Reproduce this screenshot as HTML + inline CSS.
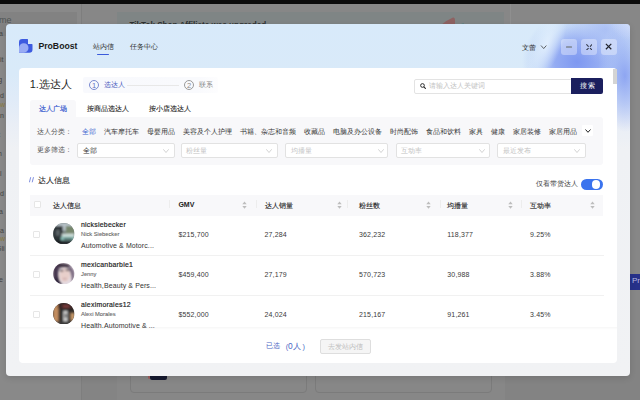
<!DOCTYPE html>
<html><head><meta charset="utf-8">
<style>
*{box-sizing:border-box;margin:0;padding:0}
html,body{width:640px;height:400px;overflow:hidden}
body{position:relative;background:#878787;font-family:"Liberation Sans",sans-serif;color:#222}
.a{position:absolute;white-space:nowrap;line-height:1}
.t7{font-size:7px}
.blue{color:#4266d0}
.gray{color:#bdbdbd}
.chev{position:absolute;width:6px;height:4px}
.sel{position:absolute;top:142.5px;height:15px;background:#fff;border:0.6px solid #e2e2e2;border-radius:2px}
.sort{position:absolute;top:200.5px;width:5px;height:8px}
.sep{position:absolute;top:200px;width:0.7px;height:8px;background:#ededed}
.cb{position:absolute;width:7.2px;height:7.2px;border:0.7px solid #e6e6e6;border-radius:1px;background:#fff}
.av{position:absolute;left:53px;width:22px;height:22px;border-radius:50%;overflow:hidden}
.nm{font-size:6.9px;color:#222;-webkit-text-stroke:0.18px #222;letter-spacing:0.25px}
.sub{font-size:5.75px;color:#666;-webkit-text-stroke:0.1px #666}
.cat{font-size:7px;color:#333;letter-spacing:0.1px}
.val{font-size:7px;color:#3a3a3a;letter-spacing:0.15px}
.hd{font-size:7px;color:#1e1e1e;-webkit-text-stroke:0.12px #1e1e1e}
.hdb{font-size:7px;font-weight:bold;color:#222}
.rowsep{position:absolute;left:29.5px;width:574px;height:0.8px;background:#f1f1f1}
</style></head>
<body>
<!-- background page -->
<div class="a" style="left:0;top:0;width:640px;height:4px;background:#0b0b0b"></div>
<div class="a" style="left:0;top:4px;width:81px;height:396px;background:#898989"></div>
<div class="a" style="left:0;top:12px;width:77px;height:24px;background:#828282"></div>
<div class="a" style="left:81px;top:4px;width:1px;height:396px;background:#7e7e7e"></div>
<div class="a" style="left:117px;top:11.5px;width:387px;height:30px;background:#7f8585"></div>
<div class="a" style="left:509.5px;top:4px;width:1px;height:30px;background:#8f8f8f"></div>
<div class="a" style="left:129.5px;top:21.6px;font-size:8.13px;font-weight:bold;color:#2e3232">TikTok Shop Affiliate was upgraded</div>
<svg class="a" style="left:441px;top:16.5px" width="24" height="8" viewBox="0 0 24 8"><path d="M0 8 Q6 3 12 0.5 Q14 0 14 3 V8 Z" fill="#8e6262"/><path d="M19 8 Q20 6 23 6.5 V8 Z" fill="#4f7f80"/></svg>
<div class="a" style="left:-1px;top:15.5px;font-size:9px;color:#4f5454">me</div>
<div class="a" style="left:-4px;top:30px;font-size:7px;color:#444">lla</div>
<div class="a" style="left:-4px;top:56px;font-size:7px;color:#444">eit</div>
<div class="a" style="left:-4px;top:76px;font-size:7px;color:#444">rg</div>
<div class="a" style="left:-4px;top:92px;font-size:7px;color:#444">od</div>
<div class="a" style="left:-4px;top:100.5px;font-size:7px;color:#8a7a40">ew</div>
<div class="a" style="left:-4px;top:112px;font-size:7px;color:#444">an</div>
<div class="a" style="left:-4px;top:131px;font-size:7px;color:#444">rt</div>
<div class="a" style="left:-4px;top:150px;font-size:7px;color:#444">m</div>
<div class="a" style="left:-4px;top:170px;font-size:7px;color:#444">al</div>
<div class="a" style="left:-4px;top:190px;font-size:7px;color:#444">od</div>
<div class="a" style="left:-4px;top:207.5px;font-size:7px;color:#444">lla</div>
<div class="a" style="left:-4px;top:226.5px;font-size:7px;color:#444">oa</div>
<div class="a" style="left:-4px;top:234.5px;font-size:7px;color:#8a7a40">ew</div>
<div class="a" style="left:-4px;top:244.5px;font-size:7px;color:#444">Gli</div>
<div class="a" style="left:-4px;top:276px;font-size:7px;color:#444">lle</div>

<div class="a" style="left:630px;top:273.5px;width:10px;height:16.5px;background:#27318a"></div>
<div class="a" style="left:632px;top:277px;font-size:8px;color:#b8bce0">Pr</div>
<div class="a" style="left:129.5px;top:350px;width:177px;height:43px;border:0.8px solid #7b7b7b;border-radius:4px"></div>
<div class="a" style="left:314.5px;top:350px;width:177.5px;height:43px;border:0.8px solid #7b7b7b;border-radius:4px"></div>
<div class="a" style="left:505px;top:350px;width:135px;height:50px;background:#838383"></div>
<div class="a" style="left:82px;top:350px;width:35px;height:50px;background:#848484"></div>
<div class="a" style="left:147.5px;top:376px;width:3px;height:3px;background:#a06060;border-radius:0 0 2px 2px"></div>
<div class="a" style="left:149.7px;top:375px;width:17.3px;height:4.8px;background:#161a30;border-radius:0 0 2px 2px"></div>

<!-- modal -->
<div class="a" style="left:6px;top:24px;width:624px;height:352px;border-radius:4px;overflow:hidden;box-shadow:0 2px 6px rgba(0,0,0,0.12);background:linear-gradient(180deg,#d8eafa 0px,#d9eaf9 50px,#e0ebf8 75px,#e9eef6 100px,#eff1f4 125px,#f1f2f4 352px)">
  <div class="a" style="left:516px;top:-12px;width:110px;height:100px;background:radial-gradient(ellipse 50% 50% at 50% 50%,rgba(118,145,240,0.92) 0%,rgba(128,154,241,0.78) 40%,rgba(160,185,244,0.4) 72%,rgba(220,233,248,0) 100%)"></div>
  <div class="a" style="left:560px;top:-30px;width:80px;height:70px;background:radial-gradient(ellipse 50% 50% at 50% 50%,rgba(150,172,243,0.6) 0%,rgba(170,190,245,0.35) 55%,rgba(220,233,248,0) 100%)"></div>
  <div class="a" style="left:594px;top:-4px;width:50px;height:112px;background:radial-gradient(ellipse 50% 50% at 50% 50%,rgba(125,150,240,0.8) 0%,rgba(140,165,242,0.5) 50%,rgba(200,215,245,0) 100%)"></div>
  <div class="a" style="left:526px;top:-18px;width:30px;height:76px;transform:rotate(22deg);background:radial-gradient(ellipse 50% 50% at 50% 50%,rgba(238,249,255,0.75) 0%,rgba(235,248,255,0.4) 55%,rgba(235,248,255,0) 100%)"></div>
  <div class="a" style="left:600px;top:-16px;width:44px;height:36px;background:radial-gradient(ellipse 50% 50% at 60% 40%,rgba(212,220,250,0.7) 0%,rgba(212,220,250,0) 100%)"></div>
</div>

<!-- header -->
<svg class="a" style="left:19.25px;top:39px" width="13.5" height="13.75" viewBox="0 0 13.5 13.75">
  <path d="M0 3.2 A3.2 3.2 0 0 1 3.2 0 H8.4 A0.6 0.6 0 0 1 9 0.6 V5 H12.9 A0.6 0.6 0 0 1 13.5 5.6 V10.5 A3.25 3.25 0 0 1 10.25 13.75 H0 Z" fill="#3d5be0"/>
  <path d="M0 13.75 V8.95 A4.75 4.75 0 0 1 9.5 8.95 A4.8 4.8 0 0 1 4.75 13.75 Z" fill="#98abf4"/>
</svg>
<div class="a" style="left:38.4px;top:41.6px;font-size:8.7px;font-weight:bold;color:#1a1a1a">ProBoost</div>
<div class="a t7" style="left:92.75px;top:42.5px;color:#333">站内信</div>
<div class="a" style="left:97px;top:53.5px;width:12px;height:1.8px;border-radius:1px;background:#3b5bdb"></div>
<div class="a t7" style="left:130.25px;top:42.5px;color:#333">任务中心</div>
<div class="a t7" style="left:522.2px;top:43.5px;color:#2a2a2a">文蕾</div>
<svg class="chev" style="left:539.6px;top:44.5px;width:7.4px;height:4.3px" viewBox="0 0 6 4"><path d="M0.5 0.5 L3 3.3 L5.5 0.5" fill="none" stroke="#333" stroke-width="0.7"/></svg>
<div class="a" style="left:561px;top:39px;width:16px;height:16px;border-radius:3px;background:rgba(255,255,255,0.36)"></div>
<div class="a" style="left:581px;top:39px;width:16px;height:16px;border-radius:3px;background:rgba(255,255,255,0.36)"></div>
<div class="a" style="left:601px;top:39px;width:16px;height:16px;border-radius:3px;background:rgba(255,255,255,0.36)"></div>
<div class="a" style="left:566px;top:45.8px;width:6px;height:2px;border-radius:0.5px;background:#8c96aa"></div>
<svg class="a" style="left:585.5px;top:43.6px" width="6.6" height="6.6" viewBox="0 0 6.6 6.6">
  <path d="M0.7 0.7 L2.3 2.3 M5.9 0.7 L4.3 2.3 M0.7 5.9 L2.3 4.3 M5.9 5.9 L4.3 4.3" fill="none" stroke="#353b4a" stroke-width="1.1" stroke-linecap="round"/>
</svg>
<svg class="a" style="left:605px;top:43.3px" width="7.2" height="7.2" viewBox="0 0 7.2 7.2">
  <path d="M0.9 0.9 L6.3 6.3 M6.3 0.9 L0.9 6.3" fill="none" stroke="#20232c" stroke-width="1.2"/>
</svg>

<!-- card -->
<div class="a" style="left:19px;top:68px;width:598px;height:295px;border-radius:4px;background:#fff"></div>
<div class="a" style="left:613px;top:69px;width:3.5px;height:15px;background:#d4d4d4"></div>

<div class="a" style="left:29.7px;top:78.5px;font-size:11px;color:#1f1f1f">1.选达人</div>
<div class="a" style="left:82.5px;top:77px;width:135px;height:16px;border-radius:2px;background:linear-gradient(90deg,#f8f9fd,#f9fafd 85%,#fdfdfe)"></div>
<div class="a" style="left:89px;top:80.25px;width:10px;height:10px;border-radius:50%;border:0.65px solid #7b8ad0"></div>
<div class="a" style="left:91.9px;top:81.5px;font-size:7.5px;color:#6575c4">1</div>
<div class="a t7 blue" style="left:103.75px;top:81.2px;color:#4a5bbd">选达人</div>
<div class="a" style="left:127px;top:85px;width:52px;height:0.6px;background:#e8e8e8"></div>
<div class="a" style="left:184px;top:80.25px;width:10px;height:10px;border-radius:50%;border:0.8px solid #9a9a9a"></div>
<div class="a" style="left:186.9px;top:81.5px;font-size:7.5px;color:#8a8a8a">2</div>
<div class="a t7" style="left:198.75px;top:81.2px;color:#888">联系</div>

<div class="a" style="left:414px;top:78.5px;width:158px;height:15px;border:0.7px solid #e3e3e3;border-radius:2px 0 0 2px;background:#fff"></div>
<svg class="a" style="left:419.6px;top:83px" width="6.2" height="6.2" viewBox="0 0 6 6"><circle cx="2.4" cy="2.4" r="1.8" fill="none" stroke="#222" stroke-width="0.9"/><path d="M3.7 3.7 L5.6 5.6" stroke="#222" stroke-width="1"/></svg>
<div class="a t7 gray" style="left:428.75px;top:82px;color:#c2c2c2">请输入达人关键词</div>
<div class="a" style="left:571px;top:78px;width:32px;height:15.5px;border-radius:0 2px 2px 0;background:#1b1f5e"></div>
<div class="a t7" style="left:579.5px;top:82px;color:#fff;letter-spacing:1.6px">搜索</div>

<!-- tabs -->
<div class="a" style="left:29.5px;top:100px;width:46px;height:18px;border-radius:3px 3px 0 0;background:#f8f8fa"></div>
<div class="a t7" style="left:39px;top:105.2px;color:#3d60d0;-webkit-text-stroke:0.2px currentColor">达人广场</div>
<div class="a t7" style="left:87.1px;top:105.2px;color:#222;-webkit-text-stroke:0.1px currentColor">按商品选达人</div>
<div class="a t7" style="left:149.4px;top:105.2px;color:#222;-webkit-text-stroke:0.1px currentColor">按小店选达人</div>

<!-- filter panel -->
<div class="a" style="left:29.5px;top:117px;width:573.5px;height:48px;border-radius:0 3px 3px 3px;background:#f8f8fa"></div>
<div class="a t7" style="left:37px;top:127.8px;color:#555">达人分类：</div>
<div class="a t7" style="left:81.5px;top:127.8px;color:#4266d0">全部</div>
<div class="a t7" style="left:103.5px;top:127.8px;color:#333">汽车摩托车</div>
<div class="a t7" style="left:146.5px;top:127.8px;color:#333">母婴用品</div>
<div class="a t7" style="left:182.5px;top:127.8px;color:#333">美容及个人护理</div>
<div class="a t7" style="left:240px;top:127.8px;color:#333">书籍、杂志和音频</div>
<div class="a t7" style="left:303.75px;top:127.8px;color:#333">收藏品</div>
<div class="a t7" style="left:332.5px;top:127.8px;color:#333">电脑及办公设备</div>
<div class="a t7" style="left:389.5px;top:127.8px;color:#333">时尚配饰</div>
<div class="a t7" style="left:425.5px;top:127.8px;color:#333">食品和饮料</div>
<div class="a t7" style="left:468.75px;top:127.8px;color:#333">家具</div>
<div class="a t7" style="left:490.5px;top:127.8px;color:#333">健康</div>
<div class="a t7" style="left:512.5px;top:127.8px;color:#333">家居装修</div>
<div class="a t7" style="left:548.75px;top:127.8px;color:#333">家居用品</div>
<div class="a" style="left:582px;top:125px;width:10.5px;height:10.5px;background:#fff;border-radius:1px"></div>
<svg class="chev" style="left:584.6px;top:129px;width:6px;height:4px" viewBox="0 0 6 4"><path d="M0.5 0.5 L3 3.3 L5.5 0.5" fill="none" stroke="#222" stroke-width="1"/></svg>

<div class="a t7" style="left:37px;top:146px;color:#555">更多筛选：</div>
<div class="sel" style="left:77.25px;width:97.25px"></div>
<div class="a t7" style="left:83.25px;top:146.5px;color:#333">全部</div>
<svg class="chev" style="left:162.75px;top:148.5px" viewBox="0 0 6 4"><path d="M0.3 0.3 L3 3.5 L5.7 0.3" fill="none" stroke="#b5b5b5" stroke-width="0.6"/></svg>
<div class="sel" style="left:180.5px;width:97.5px"></div>
<div class="a t7" style="left:186.25px;top:146.5px;color:#c2c2c2">粉丝量</div>
<svg class="chev" style="left:266.25px;top:148.5px" viewBox="0 0 6 4"><path d="M0.3 0.3 L3 3.5 L5.7 0.3" fill="none" stroke="#b5b5b5" stroke-width="0.6"/></svg>
<div class="sel" style="left:284.5px;width:103.5px"></div>
<div class="a t7" style="left:290.75px;top:146.5px;color:#c2c2c2">均播量</div>
<svg class="chev" style="left:377.5px;top:148.5px" viewBox="0 0 6 4"><path d="M0.3 0.3 L3 3.5 L5.7 0.3" fill="none" stroke="#b5b5b5" stroke-width="0.6"/></svg>
<div class="sel" style="left:395.5px;width:94px"></div>
<div class="a t7" style="left:401.25px;top:146.5px;color:#c2c2c2">互动率</div>
<svg class="chev" style="left:478.5px;top:148.5px" viewBox="0 0 6 4"><path d="M0.3 0.3 L3 3.5 L5.7 0.3" fill="none" stroke="#b5b5b5" stroke-width="0.6"/></svg>
<div class="sel" style="left:496.75px;width:88.75px"></div>
<div class="a t7" style="left:502.5px;top:146.5px;color:#c2c2c2">最近发布</div>
<svg class="chev" style="left:574.25px;top:148.5px" viewBox="0 0 6 4"><path d="M0.3 0.3 L3 3.5 L5.7 0.3" fill="none" stroke="#b5b5b5" stroke-width="0.6"/></svg>

<!-- section header -->
<svg class="a" style="left:29px;top:177.4px" width="5" height="5.5" viewBox="0 0 5 5.5"><path d="M1.7 0.2 L0.4 5.3 M4.5 0.2 L3.2 5.3" stroke="#5468d2" stroke-width="0.75"/></svg>
<div class="a" style="left:37.75px;top:176.8px;font-size:7.5px;color:#1e1e1e;-webkit-text-stroke:0.08px #1e1e1e">达人信息</div>
<div class="a t7" style="left:535.6px;top:180.3px;color:#444">仅看带货达人</div>
<div class="a" style="left:581px;top:179px;width:22px;height:10.6px;border-radius:6px;background:#3a73ee"></div>
<div class="a" style="left:591.7px;top:179.9px;width:8.8px;height:8.8px;border-radius:50%;background:#fff"></div>

<!-- table header -->
<div class="a" style="left:29.5px;top:194.5px;width:573.5px;height:21px;background:#f8f8fa"></div>
<div class="cb" style="left:33.5px;top:201px"></div>
<div class="a hd" style="left:53.4px;top:201.5px">达人信息</div>
<div class="a hdb" style="left:178.4px;top:201.2px">GMV</div>
<div class="a hd" style="left:264.5px;top:201.5px">达人销量</div>
<div class="a hd" style="left:358.75px;top:201.5px">粉丝数</div>
<div class="a hd" style="left:447px;top:201.5px">均播量</div>
<div class="a hd" style="left:530px;top:201.5px">互动率</div>
<svg class="sort" style="left:242.3px" viewBox="0 0 5 8"><path d="M2.5 0.4 L4.7 3.2 H0.3 Z M2.5 7.8 L4.7 5 H0.3 Z" fill="#bdbdbd"/></svg>
<svg class="sort" style="left:337px" viewBox="0 0 5 8"><path d="M2.5 0.4 L4.7 3.2 H0.3 Z M2.5 7.8 L4.7 5 H0.3 Z" fill="#bdbdbd"/></svg>
<svg class="sort" style="left:426.3px" viewBox="0 0 5 8"><path d="M2.5 0.4 L4.7 3.2 H0.3 Z M2.5 7.8 L4.7 5 H0.3 Z" fill="#bdbdbd"/></svg>
<svg class="sort" style="left:507.5px" viewBox="0 0 5 8"><path d="M2.5 0.4 L4.7 3.2 H0.3 Z M2.5 7.8 L4.7 5 H0.3 Z" fill="#bdbdbd"/></svg>
<svg class="sort" style="left:589.5px" viewBox="0 0 5 8"><path d="M2.5 0.4 L4.7 3.2 H0.3 Z M2.5 7.8 L4.7 5 H0.3 Z" fill="#bdbdbd"/></svg>
<div class="sep" style="left:169px"></div>
<div class="sep" style="left:256px"></div>
<div class="sep" style="left:347.3px"></div>
<div class="sep" style="left:440px"></div>
<div class="sep" style="left:521px"></div>

<!-- rows (clipped) -->
<div class="a" style="left:19px;top:215.5px;width:598px;height:112px;overflow:hidden">
 <div class="a" style="left:-19px;top:-215.5px;width:640px;height:400px">
  <div class="rowsep" style="top:254.5px"></div>
  <div class="rowsep" style="top:294.5px"></div>

  <div class="cb" style="left:33.25px;top:231.25px"></div>
  <svg class="a" style="left:53.1px;top:222.6px" width="21.5" height="21.5" viewBox="0 0 22 22"><defs><clipPath id="c1"><circle cx="11" cy="11" r="10.9"/></clipPath><filter id="bl" x="-20%" y="-20%" width="140%" height="140%"><feGaussianBlur stdDeviation="1.1"/></filter></defs>
<g clip-path="url(#c1)"><rect width="22" height="22" fill="#6f7a78"/><g filter="url(#bl)">
<rect x="0" y="0" width="22" height="8" fill="#b9c4cb"/>
<rect x="13" y="3" width="9" height="8" fill="#76866c"/>
<rect x="0" y="3" width="10" height="19" fill="#2b3034"/>
<rect x="3" y="7" width="4" height="6" fill="#5b6468"/>
<rect x="9" y="11" width="13" height="3" fill="#d6e4e0"/>
<rect x="8" y="14" width="14" height="4" fill="#8cc4bb"/>
<rect x="11" y="15.5" width="9" height="1.2" fill="#1d2426"/>
<rect x="0" y="18" width="22" height="4" fill="#1c1f20"/>
</g></g></svg>
  <div class="a nm" style="left:81px;top:221.7px">nicksiebecker</div>
  <div class="a sub" style="left:81px;top:232.2px">Nick Siebecker</div>
  <div class="a cat" style="left:81px;top:241.7px">Automotive &amp; Motorc...</div>
  <div class="a val" style="left:178.4px;top:231.2px">$215,700</div>
  <div class="a val" style="left:264.5px;top:231.2px">27,284</div>
  <div class="a val" style="left:359px;top:231.2px">362,232</div>
  <div class="a val" style="left:447.3px;top:231.2px">118,377</div>
  <div class="a val" style="left:530px;top:231.2px">9.25%</div>

  <div class="cb" style="left:33.25px;top:271.25px"></div>
  <svg class="a" style="left:53.1px;top:262.6px" width="21.5" height="21.5" viewBox="0 0 22 22"><defs><clipPath id="c2"><circle cx="11" cy="11" r="10.9"/></clipPath></defs>
<g clip-path="url(#c2)"><rect width="22" height="22" fill="#e4dbe2"/><g filter="url(#bl)">
<path d="M0 0 H9 Q6 4 5.5 9 Q5 15 8 22 H0 Z" fill="#463850"/>
<path d="M5 1 Q11 -1 18 2 L17 5 Q11 3.5 6 5 Z" fill="#3e3040"/>
<path d="M16 2 Q21 5 22 10 V22 H19 Q20 14 16.5 7 Z" fill="#7a6a80"/>
<ellipse cx="12" cy="12.5" rx="5.3" ry="7" fill="#e8cfca"/>
<rect x="7" y="7" width="3.5" height="1.6" fill="#3e3038"/>
<rect x="13" y="6.5" width="4" height="1.6" fill="#3e3038"/>
<rect x="10" y="15.5" width="4" height="1.2" fill="#c49a9c"/>
<path d="M3 14 Q6 19 10 22 H2 Z" fill="#2a2238"/>
</g></g></svg>
  <div class="a nm" style="left:81px;top:261.7px">mexicanbarbie1</div>
  <div class="a sub" style="left:81px;top:272.2px">Jenny</div>
  <div class="a cat" style="left:81px;top:281.7px">Health,Beauty &amp; Pers...</div>
  <div class="a val" style="left:178.4px;top:271.2px">$459,400</div>
  <div class="a val" style="left:264.5px;top:271.2px">27,179</div>
  <div class="a val" style="left:359px;top:271.2px">570,723</div>
  <div class="a val" style="left:447.3px;top:271.2px">30,988</div>
  <div class="a val" style="left:530px;top:271.2px">3.88%</div>

  <div class="cb" style="left:33.25px;top:311.25px"></div>
  <svg class="a" style="left:53.1px;top:302.6px" width="21.5" height="21.5" viewBox="0 0 22 22"><defs><clipPath id="c3"><circle cx="11" cy="11" r="10.9"/></clipPath></defs>
<g clip-path="url(#c3)"><rect width="22" height="22" fill="#2e2a28"/><g filter="url(#bl)">
<rect x="0" y="0" width="6" height="22" fill="#c38d5f"/>
<rect x="5" y="0" width="17" height="6" fill="#3a2626"/>
<rect x="10" y="2" width="7" height="3" fill="#7a3c3a"/>
<rect x="8" y="6" width="9" height="14" fill="#2a2a2a"/>
<rect x="10.5" y="8" width="4.5" height="11" fill="#cfcfcf"/>
<rect x="12" y="11" width="2" height="4" fill="#555"/>
<rect x="18" y="10" width="4" height="8" fill="#cf9f6d"/>
<rect x="0" y="19" width="22" height="3" fill="#3c3c3c"/>
</g></g></svg>
  <div class="a nm" style="left:81px;top:301.7px">aleximorales12</div>
  <div class="a sub" style="left:81px;top:312.2px">Alexi Morales</div>
  <div class="a cat" style="left:81px;top:321.7px">Health,Automotive &amp; ...</div>
  <div class="a val" style="left:178.4px;top:311.2px">$552,000</div>
  <div class="a val" style="left:264.5px;top:311.2px">24,024</div>
  <div class="a val" style="left:359px;top:311.2px">215,167</div>
  <div class="a val" style="left:447.3px;top:311.2px">91,261</div>
  <div class="a val" style="left:530px;top:311.2px">3.45%</div>
 </div>
</div>
<div class="a" style="left:19px;top:327px;width:598px;height:3px;background:linear-gradient(180deg,rgba(0,0,0,0.035),rgba(0,0,0,0))"></div>

<!-- footer -->
<div class="a" style="left:265.5px;top:342.3px;font-size:7.3px;color:#4a67c4">已选</div>
<div class="a" style="left:285.8px;top:342.6px;font-size:7.3px;color:#4a67c4">(</div>
<div class="a" style="left:288px;top:341.9px;font-size:8.4px;color:#4a67c4">0</div>
<div class="a" style="left:293px;top:342.8px;font-size:7.5px;color:#4a67c4">人</div>
<div class="a" style="left:302.6px;top:342.6px;font-size:7.3px;color:#4a67c4">)</div>
<div class="a" style="left:320.4px;top:338.6px;width:50.4px;height:15.3px;border:0.7px solid #dedede;border-radius:2px;background:#f5f5f5"></div>
<div class="a t7" style="left:327.7px;top:342.5px;color:#bdbdbd">去发站内信</div>
</body></html>
